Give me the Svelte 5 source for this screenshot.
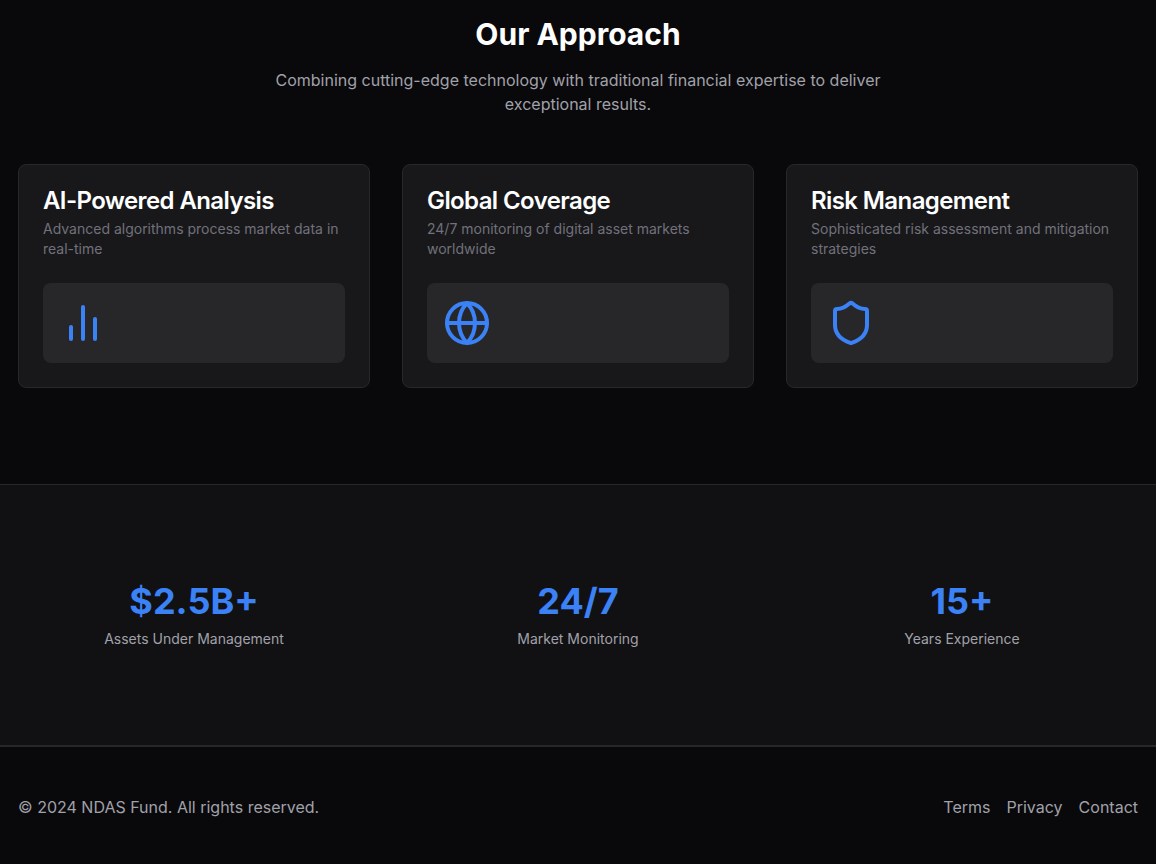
<script lang="ts">
	type IconName = 'chart' | 'globe' | 'shield';

	interface Feature {
		title: string;
		description: string;
		icon: IconName;
	}

	const features: Feature[] = [
		{
			title: 'AI-Powered Analysis',
			description: 'Advanced algorithms process market data in real-time',
			icon: 'chart'
		},
		{
			title: 'Global Coverage',
			description: '24/7 monitoring of digital asset markets worldwide',
			icon: 'globe'
		},
		{
			title: 'Risk Management',
			description: 'Sophisticated risk assessment and mitigation strategies',
			icon: 'shield'
		}
	];

	const stats = [
		{ value: '$2.5B+', label: 'Assets Under Management' },
		{ value: '24/7', label: 'Market Monitoring' },
		{ value: '15+', label: 'Years Experience' }
	];

	const links = ['Terms', 'Privacy', 'Contact'];
</script>

<main>
	<section class="approach container">
		<header>
			<h2>Our Approach</h2>
			<p>
				Combining cutting-edge technology with traditional financial expertise to deliver
				exceptional results.
			</p>
		</header>
		<div class="grid">
			{#each features as feature}
				<article class="card">
					<h3>{feature.title}</h3>
					<p>{feature.description}</p>
					<div class="panel">
						<svg viewBox="0 0 24 24" aria-hidden="true">
							{#if feature.icon === 'chart'}
								<path d="M18 20V10M12 20V4M6 20v-6" />
							{:else if feature.icon === 'globe'}
								<circle cx="12" cy="12" r="10" />
								<path d="M12 2a14.5 14.5 0 0 0 0 20 14.5 14.5 0 0 0 0-20" />
								<path d="M2 12h20" />
							{:else}
								<path
									d="M20 13c0 5-3.5 7.5-7.66 8.95a1 1 0 0 1-.67-.01C7.5 20.5 4 18 4 13V6a1 1 0 0 1 1-1c2 0 4.500-1.200 6.240-2.720a1.170 1.170 0 0 1 1.520 0C14.510 3.810 17 5 19 5a1 1 0 0 1 1 1z"
								/>
							{/if}
						</svg>
					</div>
				</article>
			{/each}
		</div>
	</section>

	<section class="stats">
		<div class="grid container">
			{#each stats as stat}
				<div class="stat">
					<div class="value">{stat.value}</div>
					<div class="label">{stat.label}</div>
				</div>
			{/each}
		</div>
	</section>
</main>

<footer>
	<div class="footer-row container">
		<p>© 2024 NDAS Fund. All rights reserved.</p>
		<nav>
			{#each links as link}
				<a href="#{link.toLowerCase()}">{link}</a>
			{/each}
		</nav>
	</div>
</footer>

<style>
	:global(body) {
		background: #09090b;
		color: #fff;
		font-family: Inter, 'Liberation Sans', sans-serif;
		font-size: 16px;
		line-height: 24px;
	}

	h2,
	h3,
	p {
		margin: 0;
	}

	.container {
		max-width: 1400px;
		margin: 0 auto;
		padding-inline: 18px;
	}

	.approach {
		padding-top: 16px;
		padding-bottom: 96px;
	}

	header {
		max-width: 672px;
		margin: 0 auto 48px;
		text-align: center;
	}

	header h2 {
		margin-bottom: 16px;
		font-size: 30px;
		font-weight: 700;
		line-height: 36px;
	}

	header p {
		color: #a1a1aa;
	}

	.grid {
		display: grid;
		grid-template-columns: repeat(3, minmax(0, 1fr));
		gap: 32px;
	}

	.card {
		padding: 24px;
		border: 1px solid #27272a;
		border-radius: 8px;
		background: #18181b;
	}

	.card h3 {
		margin-bottom: 6px;
		font-size: 24px;
		font-weight: 600;
		line-height: 24px;
		letter-spacing: -0.025em;
	}

	.card p {
		color: #71717a;
		font-size: 14px;
		line-height: 20px;
	}

	.panel {
		margin-top: 24px;
		padding: 16px;
		border-radius: 8px;
		background: #27272a;
	}

	.panel svg {
		display: block;
		width: 48px;
		height: 48px;
		fill: none;
		stroke: #3b82f6;
		stroke-width: 2;
		stroke-linecap: round;
		stroke-linejoin: round;
	}

	.stats {
		padding-block: 96px;
		border-block: 1px solid #27272a;
		background: #111113;
	}

	.stat {
		text-align: center;
	}

	.value {
		margin-bottom: 8px;
		color: #3b82f6;
		font-size: 36px;
		font-weight: 700;
		line-height: 40px;
	}

	.label {
		color: #a1a1aa;
		font-size: 14px;
		line-height: 20px;
	}

	footer {
		padding-block: 48px;
		border-top: 1px solid #27272a;
		color: #a1a1aa;
	}

	.footer-row {
		display: flex;
		align-items: center;
		justify-content: space-between;
	}

	nav {
		display: flex;
		gap: 16px;
	}

	a {
		color: inherit;
		text-decoration: none;
	}

	a:hover {
		color: #fff;
	}

	@media (max-width: 768px) {
		.grid {
			grid-template-columns: 1fr;
		}

		.footer-row {
			flex-direction: column;
			gap: 16px;
		}
	}
</style>
